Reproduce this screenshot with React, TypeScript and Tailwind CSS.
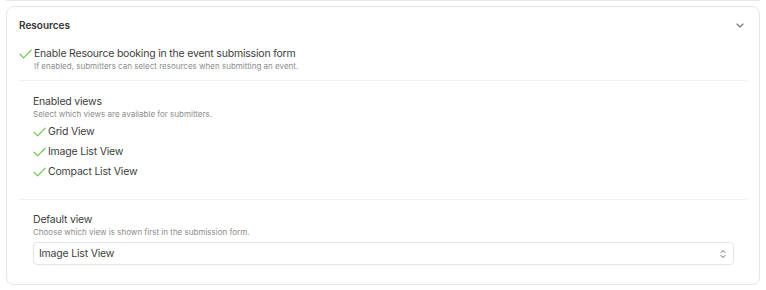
import React from 'react';

const Check: React.FC = () => (
  <svg width="13" height="10" viewBox="0 0 13 10" fill="none" className="shrink-0">
    <path d="M1 5.2 L4.6 8.8 L12.2 1.2" stroke="#6cc24a" strokeWidth="1.2" strokeLinecap="round" strokeLinejoin="round" />
  </svg>
);

const views = ['Grid View', 'Image List View', 'Compact List View'];

const App: React.FC = () => {
  return (
    <div className="w-[766px] h-[290px] bg-white overflow-hidden" style={{ fontFamily: 'Inter, "Open Sans", sans-serif' }}>
      <div className="mx-[6px] h-[1px] bg-[#e5e7eb]" />
      <div className="mx-[6px] mt-[5px] border border-[#e3e5e8] rounded-[8px] px-[12px] pb-[19px]">
        <div className="h-[37px] flex items-center justify-between">
          <span className="text-[10px] font-semibold text-[#333]">Resources</span>
          <svg width="8" height="5" viewBox="0 0 8 5" fill="none" className="mr-[3px]">
            <path d="M1 1 L4 4 L7 1" stroke="#777" strokeWidth="1.1" strokeLinecap="round" strokeLinejoin="round" />
          </svg>
        </div>

        <div className="mt-[2px] pb-[9px] border-b border-[#f0f1f3]">
          <div className="flex items-center gap-[2px] h-[15px]">
            <Check />
            <span className="text-[10.5px] tracking-[-0.2px] leading-[15px] text-[#3d3d3d]">Enable Resource booking in the event submission form</span>
          </div>
          <div className="pl-[15px] text-[8px] leading-[10px] text-[#8c8c8c]">
            If enabled, submitters can select resources when submitting an event.
          </div>
        </div>

        <div className="pl-[14px] pt-[13px] pb-[17px] border-b border-[#f0f1f3]">
          <div className="text-[10.5px] tracking-[-0.2px] leading-[15px] text-[#3d3d3d]">Enabled views</div>
          <div className="text-[8px] leading-[10px] text-[#8c8c8c]">Select which views are available for submitters.</div>
          <div className="mt-[3px] flex flex-col">
            {views.map((v) => (
              <div key={v} className="h-[20px] flex items-center gap-[2px]">
                <Check />
                <span className="text-[10.5px] tracking-[-0.2px] text-[#3d3d3d]">{v}</span>
              </div>
            ))}
          </div>
        </div>

        <div className="pl-[14px] pr-[13px] pt-[12px]">
          <div className="text-[10.5px] tracking-[-0.2px] leading-[15px] text-[#3d3d3d]">Default view</div>
          <div className="text-[8px] leading-[10px] text-[#8c8c8c]">Choose which view is shown first in the submission form.</div>
          <div className="mt-[5px] h-[23px] border border-[#e3e5e8] rounded-[4px] flex items-center justify-between pl-[5px] pr-[7px]">
            <span className="text-[10.5px] tracking-[-0.2px] text-[#3d3d3d]">Image List View</span>
            <svg width="6" height="10" viewBox="0 0 6 10" fill="none">
              <path d="M1 3.5 L3 1.5 L5 3.5 M1 6.5 L3 8.5 L5 6.5" stroke="#666" strokeWidth="1" strokeLinecap="round" strokeLinejoin="round" />
            </svg>
          </div>
        </div>
      </div>
    </div>
  );
};

export default App;
